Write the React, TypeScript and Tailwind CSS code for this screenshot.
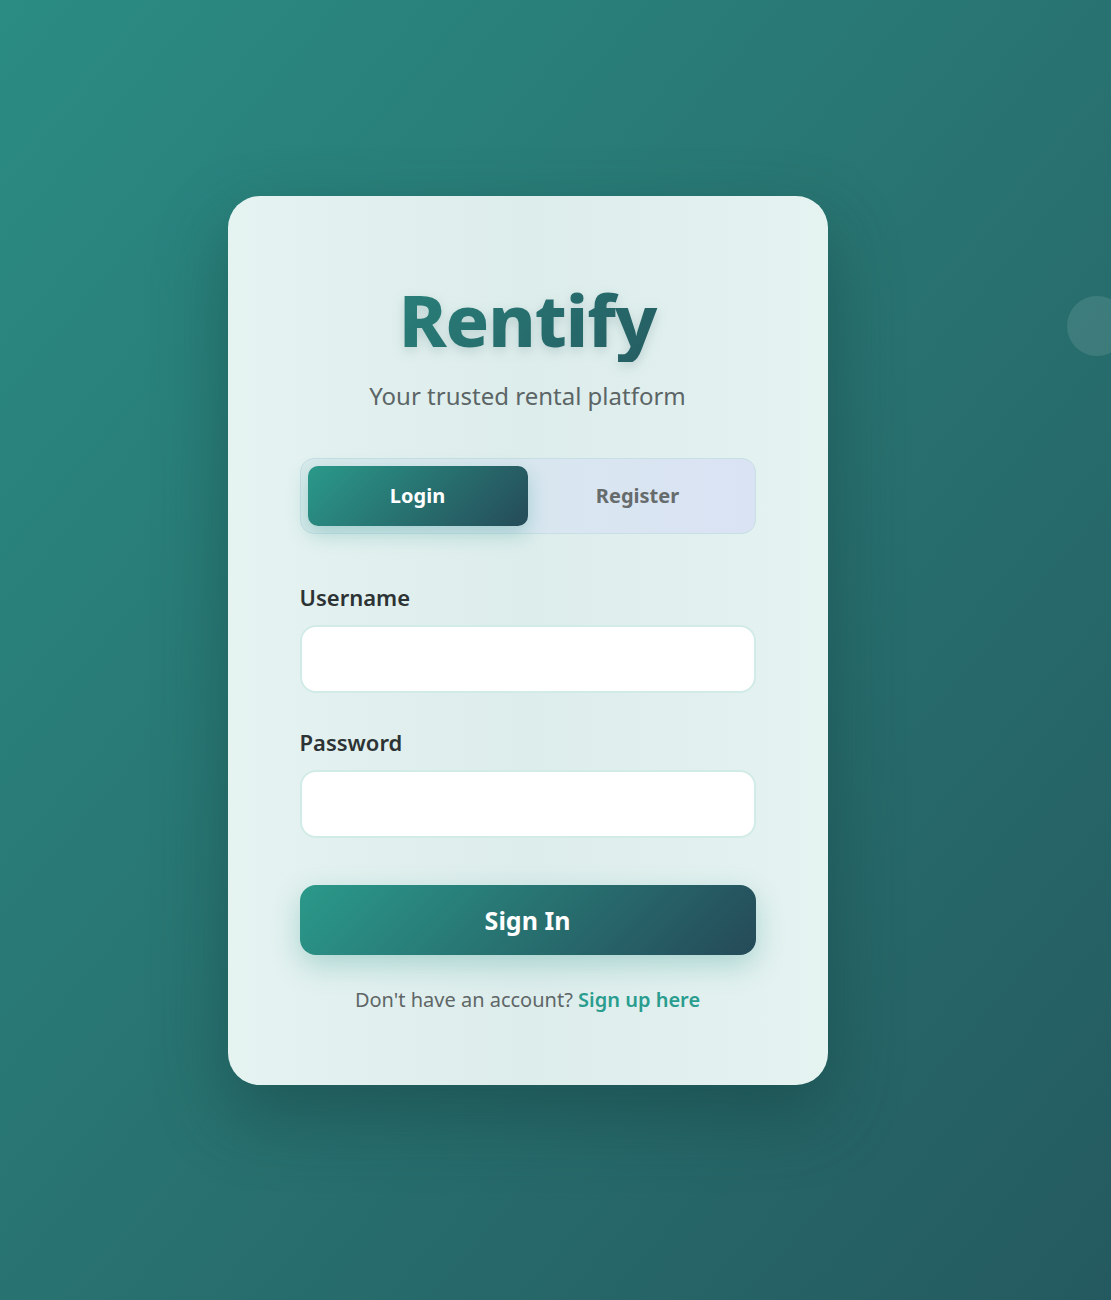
import React, { useState } from 'react';

const FONT = { fontFamily: '"Noto Sans", "Open Sans", sans-serif' };

const App: React.FC = () => {
  const [mode, setMode] = useState<'login' | 'register'>('login');
  const [username, setUsername] = useState('');
  const [password, setPassword] = useState('');

  return (
    <div
      style={FONT}
      className="relative min-h-[1300px] w-full overflow-hidden bg-gradient-to-br from-[#2a8c83] via-[#287371] to-[#245a5f] flex justify-center pt-[196px] pr-[56px]"
    >
      {/* Decorative bubble */}
      <div className="absolute left-[1067px] top-[296px] h-[60px] w-[60px] rounded-full bg-white/10" />

      {/* Card */}
      <div className="relative w-[600px] h-[889px] rounded-[32px] bg-gradient-to-r from-[#e5f3f1] via-[#ddedec] to-[#e5f3f1] shadow-[0_30px_70px_rgba(20,60,60,0.45)] px-[72px] pt-[80px] flex flex-col">
        {/* Header */}
        <h1 className="text-center text-[72px] leading-[1.2] font-extrabold tracking-[-1px] bg-[linear-gradient(135deg,#2a8a80,#24535c)] bg-clip-text text-transparent [filter:drop-shadow(0_4px_6px_rgba(30,80,80,0.18))]">
          Rentify
        </h1>
        <p className="mt-[16px] text-center text-[24px] leading-[1.5] text-[#5c6566]">
          Your trusted rental platform
        </p>

        {/* Toggle */}
        <div className="mt-[44px] flex rounded-[14px] border border-[#c7dfe5] bg-gradient-to-r from-[#d8eaeb] to-[#dae3f4] p-[7px]">
          <button
            onClick={() => setMode('login')}
            className={`flex-1 h-[60px] rounded-[10px] text-[20px] font-bold ${
              mode === 'login'
                ? 'bg-[linear-gradient(135deg,#2a998a,#254b58)] text-white shadow-[0_8px_20px_rgba(42,150,140,0.3)]'
                : 'text-[#666b6b]'
            }`}
          >
            Login
          </button>
          <button
            onClick={() => setMode('register')}
            className={`flex-1 h-[60px] rounded-[10px] text-[20px] font-bold ${
              mode === 'register'
                ? 'bg-[linear-gradient(135deg,#2a998a,#254b58)] text-white shadow-[0_8px_20px_rgba(42,150,140,0.3)]'
                : 'text-[#666b6b]'
            }`}
          >
            Register
          </button>
        </div>

        {/* Form */}
        <div className="mt-[47px] flex flex-col">
          <label className="text-[22px] leading-[1.5] font-semibold text-[#2d3334]">Username</label>
          <input
            value={username}
            onChange={e => setUsername(e.target.value)}
            className="mt-[11px] h-[68px] w-full rounded-[16px] border-2 border-[#d2ebe7] bg-white px-4 text-[18px] outline-none"
          />
          <label className="mt-[33px] text-[22px] leading-[1.5] font-semibold text-[#2d3334]">Password</label>
          <input
            type="password"
            value={password}
            onChange={e => setPassword(e.target.value)}
            className="mt-[11px] h-[68px] w-full rounded-[16px] border-2 border-[#d2ebe7] bg-white px-4 text-[18px] outline-none"
          />
          <button className="mt-[47px] h-[70px] w-full rounded-[16px] bg-[linear-gradient(135deg,#2a998a,#254a58)] text-[25px] font-bold text-white shadow-[0_10px_28px_rgba(42,150,140,0.3)]">
            Sign In
          </button>
          <p className="mt-[30px] text-center text-[20px] text-[#5f6667]">
            Don't have an account?{' '}
            <a href="#" className="font-semibold text-[#2a9d8f]">Sign up here</a>
          </p>
        </div>
      </div>
    </div>
  );
};

export default App;
